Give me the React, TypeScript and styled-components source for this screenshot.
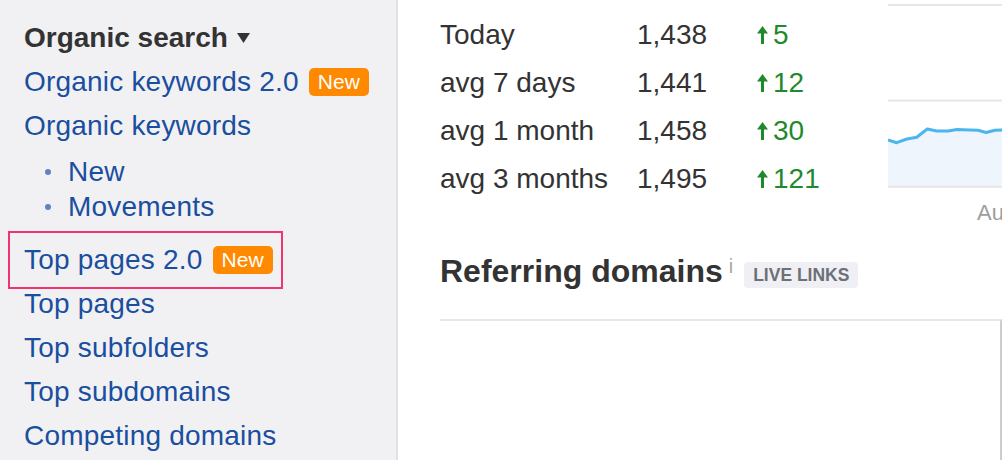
import React from 'react';
import styled, { createGlobalStyle } from 'styled-components';

type StatRow = {
  label: string
  value: string
  change: string
}

const stats: StatRow[] = [
  { label: 'Today', value: '1,438', change: '5' },
  { label: 'avg 7 days', value: '1,441', change: '12' },
  { label: 'avg 1 month', value: '1,458', change: '30' },
  { label: 'avg 3 months', value: '1,495', change: '121' },
];

const linePoints: [number, number][] = [
  [0, 140], [8.7, 142.7], [19, 139], [28.7, 137.3], [39.3, 129], [48.7, 131],
  [60, 131], [69, 129.5], [82, 130], [90, 130.3], [98, 132.5], [107, 130.3], [116, 129.8],
];

const GlobalStyle = createGlobalStyle`
  html, body {
    margin: 0;
    padding: 0;
  }
  body {
    font-family: "Liberation Sans", Arial, Helvetica, sans-serif;
    background: #fff;
    overflow: hidden;
  }
`

const Page = styled.div`
  display: flex;
  width: 1002px;
  height: 460px;
  overflow: hidden;
`

const Sidebar = styled.nav`
  flex: 0 0 398px;
  box-sizing: border-box;
  display: flex;
  flex-direction: column;
  align-items: flex-start;
  padding: 16px 0 0 24px;
  background: #f1f1f4;
  border-right: 2px solid #e1e1e4;
`

const SectionTitle = styled.div`
  display: flex;
  align-items: center;
  gap: 9px;
  height: 44px;
  font-size: 28px;
  font-weight: bold;
  color: #333;
`

const NavLink = styled.a`
  display: flex;
  align-items: center;
  gap: 10px;
  height: 44px;
  font-size: 28px;
  letter-spacing: 0.2px;
  color: #1a4e9e;
  text-decoration: none;
  white-space: nowrap;
`

const Badge = styled.span`
  display: inline-block;
  height: 28px;
  line-height: 28px;
  padding: 0 9px;
  border-radius: 5px;
  background: #ff8900;
  color: #fff;
  font-size: 21px;
  letter-spacing: 0;
`

const Highlight = styled.div`
  align-self: flex-start;
  margin: -7px 0 -7px -16px;
  padding: 5px 8px 5px 14px;
  border: 2px solid #f1336f;
`

const SubList = styled.div`
  display: flex;
  flex-direction: column;
  margin: 6px 0 14px 21px;
`

const SubLink = styled(NavLink)`
  height: 35px;
  gap: 17px;

  &::before {
    content: '';
    width: 6px;
    height: 6px;
    border-radius: 50%;
    background: #5b84c4;
  }
`

const Main = styled.main`
  flex: 1;
  display: flex;
  flex-direction: column;
  padding-left: 42px;
  min-width: 0;
`

const TopRow = styled.div`
  display: flex;
  height: 234px;
`

const Stats = styled.div`
  flex: 0 0 448px;
  display: grid;
  grid-template-columns: 197px 120px 1fr;
  grid-auto-rows: 48px;
  align-items: center;
  align-content: start;
  padding-top: 11px;
  font-size: 28px;
  color: #333;
`

const Change = styled.span`
  display: flex;
  align-items: center;
  gap: 5px;
  color: #1f8a2c;
`

const Chart = styled.div`
  flex: 1;
  overflow: hidden;
`

const ChartSvg = styled.svg`
  display: block;
`

const AxisLabel = styled.div`
  height: 26px;
  line-height: 26px;
  padding-left: 89px;
  margin-top: 10px;
  font-size: 22px;
  color: #9d9d9d;
  white-space: nowrap;
`

const Heading = styled.div`
  display: flex;
  height: 40px;
  margin-top: 17px;
`

const HeadingText = styled.h2`
  margin: 0;
  align-self: center;
  font-size: 32px;
  font-weight: bold;
  color: #333;
`

const Info = styled.span`
  align-self: flex-start;
  margin: 5px 0 0 6px;
  font-size: 20px;
  line-height: 20px;
  color: #a8a8a8;
`

const LiveLinks = styled.span`
  align-self: flex-end;
  margin: 0 0 3px 11px;
  height: 26px;
  line-height: 27px;
  padding: 0 9px;
  border-radius: 4px;
  background: #f0f0f4;
  color: #6b7079;
  font-size: 17.5px;
  font-weight: bold;
`

const Panel = styled.div`
  flex: 1;
  margin-top: 28px;
  border-top: 2px solid #e8e8e8;
  border-right: 2px solid #cdcdcd;
`

const ArrowUp = () => (
  <svg width="11" height="18" viewBox="0 0 11 18">
    <path d="M5.5 0 L11 7.5 L7 7.5 L7 18 L4 18 L4 7.5 L0 7.5 Z" fill="currentColor" />
  </svg>
);

const Caret = () => (
  <svg width="13" height="10" viewBox="0 0 13 10">
    <path d="M0 0 H13 L6.5 10 Z" fill="#333" />
  </svg>
);

const line = linePoints.map(([x, y]) => `${x},${y}`).join(' ');
const area = `M0,186 L${line.split(' ').join(' L')} L116,186 Z`;

export default function App() {
  return (
    <Page>
      <GlobalStyle />
      <Sidebar>
        <SectionTitle>Organic search <Caret /></SectionTitle>
        <NavLink href="#">Organic keywords 2.0 <Badge>New</Badge></NavLink>
        <NavLink href="#">Organic keywords</NavLink>
        <SubList>
          <SubLink href="#">New</SubLink>
          <SubLink href="#">Movements</SubLink>
        </SubList>
        <Highlight>
          <NavLink href="#">Top pages 2.0 <Badge>New</Badge></NavLink>
        </Highlight>
        <NavLink href="#">Top pages</NavLink>
        <NavLink href="#">Top subfolders</NavLink>
        <NavLink href="#">Top subdomains</NavLink>
        <NavLink href="#">Competing domains</NavLink>
      </Sidebar>
      <Main>
        <TopRow>
          <Stats>
            {stats.map(row => (
              <React.Fragment key={row.label}>
                <span>{row.label}</span>
                <span>{row.value}</span>
                <Change><ArrowUp />{row.change}</Change>
              </React.Fragment>
            ))}
          </Stats>
          <Chart>
            <ChartSvg width="116" height="190" viewBox="0 0 116 190">
              <line x1="0" y1="5" x2="116" y2="5" stroke="#e6e6e6" strokeWidth="2" />
              <line x1="0" y1="100.5" x2="116" y2="100.5" stroke="#e6e6e6" strokeWidth="2" />
              <path d={area} fill="#eef5fd" />
              <polyline points={line} fill="none" stroke="#4db5ee" strokeWidth="3" strokeLinejoin="round" />
              <line x1="0" y1="186.7" x2="116" y2="186.7" stroke="#e6e6e6" strokeWidth="2" />
            </ChartSvg>
            <AxisLabel>Aug</AxisLabel>
          </Chart>
        </TopRow>
        <Heading>
          <HeadingText>Referring domains</HeadingText>
          <Info>i</Info>
          <LiveLinks>LIVE LINKS</LiveLinks>
        </Heading>
        <Panel />
      </Main>
    </Page>
  );
}
